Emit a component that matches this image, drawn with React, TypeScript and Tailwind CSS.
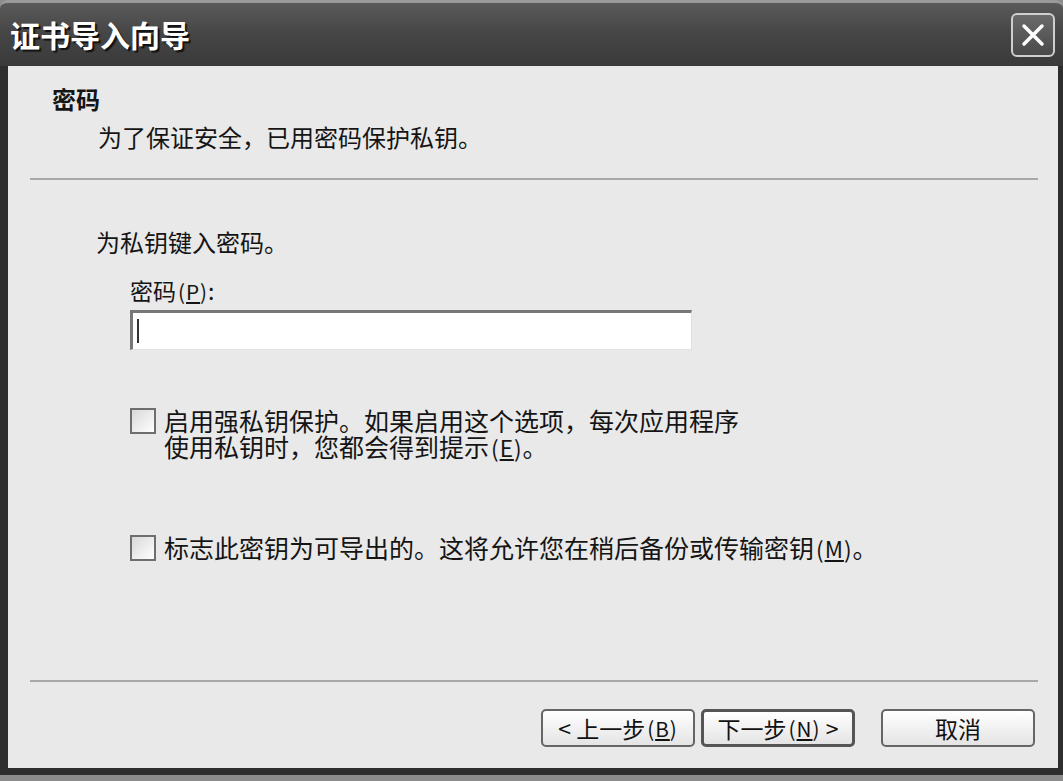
import React from "react";

const font = { fontFamily: '"Noto Sans CJK SC", "Noto Sans", sans-serif' };

// mnemonic key like (P), letter underlined
function Mn({ k }: { k: string }) {
  return (
    <span className="text-[0.9em] tracking-[1px] ml-[2px]">
      (<span className="underline underline-offset-2">{k}</span>)
    </span>
  );
}

function Checkbox() {
  return <div className="w-[26px] h-[26px] mt-[1px] shrink-0 border-2 border-[#6e6e6e] bg-gradient-to-br from-[#d8d8d8] to-white" />;
}

function WizButton({ children, primary }: { children: React.ReactNode; primary?: boolean }) {
  return (
    <button
      className={`w-[154px] h-[38px] rounded-[5px] bg-gradient-to-b from-white to-[#e4e4e4] text-[23px] leading-none text-[#111] flex items-center justify-center ${
        primary ? "border-[3px] border-[#555]" : "border-2 border-[#666]"
      }`}
    >
      {children}
    </button>
  );
}

export default function App() {
  return (
    <div className="w-[1063px] h-[781px] bg-[#8c8c8c] overflow-hidden" style={font}>
      <div className="h-[775px] flex flex-col">
        {/* title bar */}
        <div className="h-[66px] shrink-0 flex items-center justify-between pl-[10px] pr-[8px] rounded-t-[8px] border-t-[3px] border-[#9a9a9a] bg-gradient-to-b from-[#5a5a5a] via-[#454545] to-[#3a3a3a]">
          <span className="text-[30px] font-bold text-white [text-shadow:2px_2px_1px_#111]">证书导入向导</span>
          <div className="w-[44px] h-[44px] rounded-[6px] border-2 border-[#cfcfcf] bg-gradient-to-b from-[#6a6a6a] to-[#4a4a4a] flex items-center justify-center">
            <svg width="28" height="28" viewBox="0 0 28 28">
              <path d="M5 5 L23 23 M23 5 L5 23" stroke="white" strokeWidth="3.5" strokeLinecap="round" />
            </svg>
          </div>
        </div>

        {/* body */}
        <div className="flex-1 flex flex-col bg-[#e9e9e9] border-l-[8px] border-r-[5px] border-b-[7px] border-[#2e2e2e] text-[#151515]">
          {/* header */}
          <div className="pl-[44px] pt-[20px]">
            <div className="text-[24px] font-bold leading-[26px]">密码</div>
            <div className="ml-[46px] mt-[12px] text-[24px] leading-[26px]">为了保证安全，已用密码保护私钥。</div>
          </div>
          <div className="ml-[22px] mr-[20px] mt-[28px] h-[2px] bg-[#a8a8a8]" />

          {/* content */}
          <div className="pl-[88px] mt-[49px] text-[24px] leading-[26px]">为私钥键入密码。</div>
          <div className="pl-[122px] mt-[22px] text-[23px] leading-[26px]">
            密码<Mn k="P" />:
          </div>
          <div className="ml-[122px] mt-[6px] w-[562px] h-[40px] bg-white border-t-[3px] border-l-[3px] border-[#777] border-r border-b border-r-[#e0e0e0] border-b-[#e0e0e0] flex items-center pl-[4px]">
            <div className="w-[2px] h-[24px] bg-[#333]" />
          </div>

          <div className="ml-[122px] mt-[57px] flex gap-[8px]">
            <Checkbox />
            <div className="text-[25px] leading-[26px]">
              <div>启用强私钥保护。如果启用这个选项，每次应用程序</div>
              <div>使用私钥时，您都会得到提示<Mn k="E" />。</div>
            </div>
          </div>

          <div className="ml-[122px] mt-[74px] flex gap-[8px]">
            <Checkbox />
            <div className="text-[25px] leading-[26px]">
              标志此密钥为可导出的。这将允许您在稍后备份或传输密钥<Mn k="M" />。
            </div>
          </div>

          <div className="flex-1" />
          <div className="ml-[22px] mr-[20px] h-[2px] bg-[#a8a8a8]" />
          <div className="flex justify-end pr-[23px] mt-[27px] mb-[21px]">
            <div className="flex gap-[6px]">
              <WizButton>
                &lt;&nbsp;上一步<Mn k="B" />
              </WizButton>
              <WizButton primary>
                下一步<Mn k="N" />&nbsp;&gt;
              </WizButton>
            </div>
            <div className="ml-[26px]">
              <WizButton>取消</WizButton>
            </div>
          </div>
        </div>
      </div>
    </div>
  );
}
